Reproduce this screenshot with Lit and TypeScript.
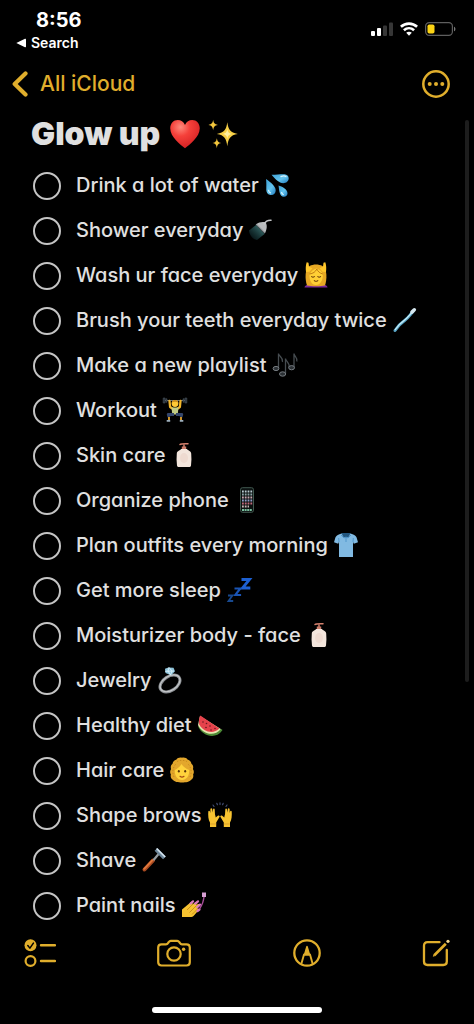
import { LitElement, html, css, svg, nothing, type SVGTemplateResult } from "lit";
import { customElement, property, state } from "lit/decorators.js";

const GLYPHS: Record<string, SVGTemplateResult> = {
  heart: svg`
    <defs><radialGradient id="hg" cx=".35" cy=".25" r=".8"><stop offset="0" stop-color="#ff8a7c"/><stop offset=".4" stop-color="#f5403a"/><stop offset="1" stop-color="#d31f22"/></radialGradient></defs>
    <path fill="url(#hg)" d="M13 24.6C9.500 21.800 1 15.500 1 8.300 1 4.500 3.700 1.700 7.100 1.700c2.600 0 4.800 1.500 5.900 3.900 1.100-2.400 3.300-3.900 5.900-3.900C22.300 1.700 25 4.500 25 8.300c0 7.200-8.500 13.500-12 16.300z"/>`,
  sparkles: svg`
    <path fill="#f6cf45" d="M16.500 3.500c.9 6 2.200 8.400 8.500 9.500-6.300 1.100-7.600 3.500-8.500 10-.9-6.500-2.200-8.900-8.500-10 6.300-1.100 7.600-3.500 8.500-9.500z"/>
    <path fill="#fff0a0" d="M16.500 9c.5 2.700 1.200 3.500 3.900 4-2.700.5-3.400 1.300-3.900 4-.5-2.700-1.200-3.500-3.900-4 2.700-.5 3.400-1.300 3.900-4z"/>
    <path fill="#f3c63c" d="M5 1.500c.5 2.800 1.100 3.600 3.800 4.100C6.100 6.100 5.500 7 5 9.900 4.500 7 3.900 6.100 1.200 5.600 3.900 5.100 4.500 4.300 5 1.500zM8 16.500c.5 2.600 1 3.400 3.500 3.900-2.500.5-3 1.300-3.500 4.100-.5-2.800-1-3.600-3.500-4.100 2.500-.5 3-1.300 3.500-3.900z"/>`,
  water: svg`
    <defs><linearGradient id="wg" x1="0" y1="0" x2="1" y2="1"><stop offset="0" stop-color="#3d9fd4"/><stop offset=".55" stop-color="#63c4ee"/><stop offset="1" stop-color="#2179bd"/></linearGradient></defs>
    <path fill="url(#wg)" d="M2 7c5 3.500 9.700 7.300 9.700 11.400 0 2.600-1.800 4.600-4.500 4.600-3 0-4.900-2.200-4.900-5.500C2.300 14 2.500 10.500 2 7z"/>
    <path fill="url(#wg)" d="M7.500 2.800C13 2.600 17 2 20.500 2.200c2.500.2 4.200 1.800 4.200 4.100 0 3-2.400 4.900-5.400 4.900C15 11.200 11 7 7.500 2.800z"/>
    <path fill="url(#wg)" d="M14.500 13.500c3.500 1 9 3.900 9 7.700 0 2-1.400 3.600-3.600 3.600-4.400 0-4.700-6.500-5.400-11.300z"/>
    <path fill="none" stroke="#d8f4ff" stroke-width="1.300" stroke-linecap="round" d="M4.600 18.500c.2 1.200.8 2 1.800 2.300M17 4.600c1.700-.8 3.700-1 4.900-.1M17.600 20.500c.3 1 .8 1.700 1.700 2"/>`,
  shower: svg`
    <defs><linearGradient id="sg" x1="1" y1="0" x2="0" y2="1"><stop offset="0" stop-color="#4b8d8b"/><stop offset="1" stop-color="#0b2a2f" stop-opacity=".3"/></linearGradient></defs>
    <path fill="url(#sg)" d="M8 8L1 13.500c.5 5 3.500 8.500 8 9.500l7.500-6z"/>
    <path fill="#b9bcbe" d="M8 7.500C11 5 15 4.500 17.500 5.500c1.800 1.900 1.700 6.500-.6 10.800z"/>
    <path fill="#8b9397" d="M7.700 7.400l.9-.6 8.700 8.800-.7.900z"/>
    <path fill="none" stroke="#c3c5c7" stroke-width="1.600" stroke-linecap="round" d="M16 7c2-3.500 4-4 7-3.800"/>`,
  massage: svg`
    <path fill="#7a2a9c" d="M1.500 25.500c0-2.500 4-3.500 11.500-3.500s11.500 1 11.500 3.500z"/>
    <path fill="#e6a824" d="M4 23.500C1.800 17 1.800 6.500 6.500 4c4-2 9-2 13 0 4.700 2.500 4.700 13 2.500 19.500-4 1-14 1-18 0z"/>
    <path fill="#ffcf35" d="M6.500 12.500C8 9 10.500 7 13.500 6.500c3.500 1 5.500 3 6.300 6 .4 5.500-2.500 10.500-6.800 10.500s-7-5-6.500-10.500z"/>
    <path fill="none" stroke="#c27d13" stroke-width="1" d="M6.500 12c3.500-.5 6-2 7.300-5 1 2.500 3 4.200 6 5"/>
    <path fill="none" stroke="#6f420b" stroke-width="1.100" stroke-linecap="round" d="M8.600 14.500c.8.900 2 .9 2.800 0M14.800 14.500c.8.900 2 .9 2.800 0M11.300 18.600c1 .8 2.500.8 3.500 0"/>
    <path fill="#ffc72b" d="M3 10c-.5-3.500-.3-6.800.7-9.700l1.800.4.5 4 3.500 1.500-3 3.500zM23 10c.5-3.500.3-6.800-.7-9.700l-1.800.4-.5 4-3.500 1.500 3 3.500z"/>`,
  toothbrush: svg`
    <path fill="none" stroke="#5aa7c8" stroke-width="3" stroke-linecap="round" d="M3 23.500c3-4.500 4.500-6.500 9-9.500 4-2.800 5.500-5.500 9-9.500"/>
    <path fill="none" stroke="#c7edf8" stroke-width="1.300" stroke-linecap="round" d="M3.300 22.500c3-4.300 4.500-6 8.500-8.800 4-2.800 5.500-5.500 8.700-8.700"/>
    <path fill="none" stroke="#d5e6ee" stroke-width="3.600" stroke-linecap="round" d="M20 5l2.300-2.200"/>`,
  notes: svg`
    <g fill="none" stroke="#464c50" stroke-width="1.300"><path d="M6.500 16V1.500c.3 3 5 4 4 8.500M13.500 21.500V6.500c.3 3 4.800 4.500 3.500 9M22 15.500V1.500c.2 3 4 4 2.800 8"/></g>
    <g fill="#2c3135" stroke="#777d82" stroke-width="1"><ellipse cx="4" cy="16.500" rx="2.900" ry="2.100"/><ellipse cx="10.600" cy="22" rx="3.100" ry="2.200"/><ellipse cx="19.600" cy="15.700" rx="2.900" ry="2.100"/></g>`,
  lifter: svg`
    <path stroke="#6a757c" stroke-width="1" d="M2 3.500h22"/>
    <path fill="#27303a" stroke="#4a545c" stroke-width=".6" d="M1.200 1h1.900v5H1.200zM22.900 1h1.900v5h-1.900zM3.900 1.800H5v3.400H3.900zM21 1.800h1.100v3.400H21z"/>
    <path fill="none" stroke="#f2b62a" stroke-width="2.300" stroke-linecap="round" stroke-linejoin="round" d="M7.500 4l.6 6 2.900 2M18.500 4l-.6 6-2.900 2"/>
    <path fill="#c2cc84" d="M9.500 10.500h7l-.8 7h-5.400z"/>
    <circle cx="13" cy="6.500" r="3.400" fill="#ffc935"/><path fill="#c98a20" d="M9.700 5.500C10 2 16 2 16.300 5.500c-2-1-4.600-1-6.600 0z"/>
    <path fill="none" stroke="#34466b" stroke-width="2.800" stroke-linejoin="round" d="M12 17.500H6.200l.8 2.500M14 17.500h5.800L19 20"/>
    <path fill="none" stroke="#d99c2c" stroke-width="1.900" d="M7 20v3M19 20v3"/>
    <path fill="#9eb0bd" d="M4.700 23h3.500v1.700H4.700zM17.800 23h3.500v1.700h-3.500z"/>`,
  lotion: svg`
    <path fill="none" stroke="#d4806d" stroke-width="1.500" stroke-linejoin="round" stroke-linecap="round" d="M9 2.500c1-1 2.500-1 8-.8M13 2v4"/>
    <path fill="#cc7b69" d="M10.800 4.500h4.400v3h-4.400z"/>
    <path fill="#f3e5dc" d="M10 7h6c.5 1.500 4 1.500 4.200 4.500.4 4 .3 8-.2 12-.2 1.300-1 1.500-2 1.500H8c-1 0-1.800-.2-2-1.500-.5-4-.6-8-.2-12C6 8.500 9.500 8.500 10 7z"/>
    <ellipse cx="13" cy="16" rx="4" ry="5" fill="#eedad0"/>`,
  phone: svg`
    <rect x="6.500" y=".7" width="13" height="24.600" rx="2" fill="#0b1110" stroke="#41584f" stroke-width="1"/>
    <g stroke-width="1.800" fill="none" stroke-dasharray="1.800 1"><path stroke="#b7c9cf" d="M8 4.500h10.500"/><path stroke="#8ba3a5" d="M8 7.500h10.500"/><path stroke="#c9a6b0" d="M8 10.500h10.500"/><path stroke="#8e9cc7" d="M8 13.500h10.500"/><path stroke="#c0697a" d="M8 16.500h10.500"/><path stroke="#c8b6b6" d="M8 19.500h7"/></g>
    <path stroke="#79bd9d" stroke-width="2" stroke-dasharray="2 .6" d="M8 23h10.400"/>`,
  shirt: svg`
    <path fill="#81bae2" d="M8.500 1.500h9c3 .7 5 2 6 3.800l1.500 5-4.200 1.400-.8-1.700V25H6V10l-.8 1.700L1 10.300l1.500-5c1-1.800 3-3.100 6-3.800z"/>
    <path fill="#225780" d="M8.500 1h9l-1.500 3.500c-1.500 1.400-4.500 1.400-6 0z"/>
    <path fill="none" stroke="#4c93c8" stroke-width=".9" d="M6 10l-.3-4M20 10l.3-4M8 3l3 3 2-1 2 1 3-3M13 5v5"/>`,
  zzz: svg`
    <path fill="none" stroke="#1d60d2" stroke-width="2.800" d="M15.500 2.500h8l-7 8.500h7.800"/>
    <path fill="none" stroke="#1a54b4" stroke-width="2.100" d="M8.500 11.500h5.800l-5 6.500h5.800"/>
    <path fill="none" stroke="#18498f" stroke-width="1.800" d="M2 18.500h4.500l-4 5.500h4.700"/>`,
  ring: svg`
    <ellipse cx="13" cy="16.500" rx="11" ry="7" transform="rotate(-33 13 16.500)" fill="none" stroke="#8c9094" stroke-width="3"/>
    <ellipse cx="13" cy="16.300" rx="11" ry="7" transform="rotate(-33 13 16.300)" fill="none" stroke="#c5c7c9" stroke-width="1.100"/>
    <path fill="#8fc4db" d="M8 1.800L11.500.5l5 .3 1.500 3.500-3.800 4-5.700-2.300z"/>
    <path fill="none" stroke="#dff4fb" stroke-width=".8" d="M8 4.300l9-.3M11 4l2.500 4L15 4l-3-3.500z"/>`,
  melon: svg`
    <path fill="#4d8c36" d="M1.200 14.500C5 24 18.500 28 25.200 18.500c.3-.5 0-1-.5-1.300L2 13z"/>
    <path fill="#e9e3b0" d="M1 13C5.500 22 17 25.500 23.800 17L3 4z"/>
    <path fill="#e6424b" d="M3.300 3.500c-1.500 3-1.700 6-1 9C6.500 20 16 22.800 22.400 16.600z"/>
    <g fill="#6a1720"><circle cx="6" cy="10" r=".8"/><circle cx="9.500" cy="11.500" r=".8"/><circle cx="9" cy="15.500" r=".8"/><circle cx="13" cy="14" r=".8"/><circle cx="14" cy="18" r=".8"/><circle cx="18" cy="16.500" r=".8"/></g>`,
  curly: svg`
    <path fill="#e3a72c" d="M13 .8c2.500-.6 4.500.4 5.500 1.600 2.500.5 3.800 2.500 3.900 4.300 1.800 1.300 2.200 3.500 1.500 5.300 1.300 1.800 1.200 4 .2 5.500.7 2.300-.3 4.500-2 5.300C20.700 25 17 25.500 13 25.500S5.300 25 3.900 22.800c-1.700-.8-2.700-3-2-5.300-1-1.500-1.100-3.700.2-5.500-.7-1.800-.3-4 1.500-5.300.1-1.800 1.400-3.800 3.900-4.300C8.500 1.200 10.500.2 13 .8z"/>
    <path fill="none" stroke="#c28319" stroke-width=".8" stroke-dasharray="1.500 1.500" d="M5 20c-2-4-1.500-10 2.500-13.500M21 20c2-4 1.500-10-2.500-13.500M8 4.500c3-1.500 7-1.500 10 0"/>
    <path fill="#ffd23c" d="M5.800 13c2.700-1.200 5-3.200 6.700-6 1.700 2.700 4.500 4.800 7.700 6 .3 5.800-2.700 10-7.200 10s-7.500-4.200-7.200-10z"/>
    <g fill="#5a350b"><ellipse cx="9.800" cy="14.300" rx="1" ry="1.300"/><ellipse cx="16.200" cy="14.300" rx="1" ry="1.300"/></g>
    <path fill="none" stroke="#a64d16" stroke-width="1.200" stroke-linecap="round" d="M11 19.300c1.200.9 2.800.9 4 0"/>`,
  hands: svg`
    <g fill="#f8c331"><path d="M3 25v-4.500C1.300 18 1 13 1.300 9.500c.2-1 1.400-1 1.600 0L3.300 11l.1-4c.2-1 1.600-1 1.800 0l.3 3.500.6-3.300c.2-1 1.600-.8 1.600.2L8 12.500c.4 1 .6 2 .7 3l2.400-1.900c1-.6 2.100.4 1.400 1.400L9.200 20.500V25z"/><path d="M23 25v-4.500c1.700-2.500 2-7.500 1.700-11-.2-1-1.400-1-1.600 0l-.4 1.500-.1-4c-.2-1-1.600-1-1.800 0l-.3 3.500-.6-3.300c-.2-1-1.600-.8-1.600.2l-.3 5.100c-.4 1-.6 2-.7 3l-2.400-1.900c-1-.6-2.100.4-1.400 1.400l3.300 5.500V25z"/></g>
    <path fill="none" stroke="#d2922a" stroke-width=".7" d="M3.200 22h6M16.800 22h6"/>
    <path stroke="#46527a" stroke-width="1.100" stroke-linecap="round" d="M6 3l1 1.500M9.800 1.200l.6 1.600M13 .8v1.700M16.200 1.200l-.6 1.600M20 3l-1 1.500"/>`,
  razor: svg`
    <path stroke="#a84a21" stroke-width="4" stroke-linecap="round" d="M3.500 22.500L12 13.500"/>
    <path stroke="#e1783c" stroke-width="1.900" stroke-linecap="round" d="M3.200 21.800l8-8.500"/>
    <path stroke="#969da2" stroke-width="2.200" stroke-linecap="round" d="M13 12.500l5-6"/>
    <path stroke="#6b8599" stroke-width="4" d="M15 2.300l8.500 8.500"/>
    <path stroke="#d4e2ec" stroke-width="1.700" d="M15.600 1.500l8.500 8.500"/>`,
  nails: svg`
    <path fill="#f6c231" d="M1 25v-7.500l9-7.500c1.200-.8 2.300.3 1.700 1.500l-1 1.500 4-3c1.200-.7 2.300.4 1.500 1.600l-1.200 1.700 2-1.200c1.200-.5 2.200.6 1.400 1.700l-2.200 2.700c1.400-.3 2.200.8 1.400 1.800L13 23.500c-1 1-2 1.500-4 1.500z"/>
    <path fill="none" stroke="#be8118" stroke-width=".8" d="M6 18l5-5M8.500 20.500l7-7M11 22.500l6-6"/>
    <path fill="none" stroke="#dc79bf" stroke-width="2.200" stroke-linecap="round" d="M9.500 11.500l2.500-2.200M14.200 11.700l2.800-2.400M16.200 15.300l2.800-2.700M16.500 19l2-1.500"/>
    <path fill="none" stroke="#a94d9b" stroke-width="1.300" d="M18.500 17c2.500-3.500 4-7 4.500-12"/>
    <path fill="#d69fd3" d="M21 .5h4v4.500h-4z"/>`,
};

const ITEMS: [string, string][] = [
  ["Drink a lot of water", "water"],
  ["Shower everyday", "shower"],
  ["Wash ur face everyday", "massage"],
  ["Brush your teeth everyday twice", "toothbrush"],
  ["Make a new playlist", "notes"],
  ["Workout", "lifter"],
  ["Skin care", "lotion"],
  ["Organize phone", "phone"],
  ["Plan outfits every morning", "shirt"],
  ["Get more sleep", "zzz"],
  ["Moisturizer body - face", "lotion"],
  ["Jewelry", "ring"],
  ["Healthy diet", "melon"],
  ["Hair care", "curly"],
  ["Shape brows", "hands"],
  ["Shave", "razor"],
  ["Paint nails", "nails"],
];

@customElement("note-emoji")
export class NoteEmoji extends LitElement {
  @property() name = "";
  static styles = css`
    :host { display: block; flex: none; width: 26px; height: 26px; }
    svg { display: block; width: 100%; height: 100%; overflow: visible; }
  `;
  render() {
    return html`<svg viewBox="0 0 26 26" fill="none" aria-hidden="true">${GLYPHS[this.name] ?? nothing}</svg>`;
  }
}

@customElement("app-root")
export class AppRoot extends LitElement {
  @state() private done = new Set<number>();

  static styles = css`
    :host {
      display: flex;
      flex-direction: column;
      min-height: 100vh;
      background: #000;
      color: #e0e0e0;
      font-family: Inter, "Liberation Sans", sans-serif;
      --accent: #e0ae2c;
    }
    * { box-sizing: border-box; }
    svg { display: block; flex: none; }
    button, a { color: var(--accent); background: none; border: 0; padding: 0; font: inherit; text-decoration: none; }
    button { cursor: pointer; }
    .status { display: flex; justify-content: space-between; padding: 8px 18px 0 16px; height: 60px; color: #fff; }
    .clock { padding-left: 20px; font-size: 20px; line-height: 24px; font-weight: 700; }
    .status .back-app { display: flex; align-items: center; gap: 5px; color: #fff; font-size: 14px; line-height: 22px; font-weight: 600; }
    .signals { display: flex; gap: 7px; height: 14px; margin-top: 14px; }
    .nav { display: flex; align-items: center; justify-content: space-between; height: 47px; padding: 0 24px 0 12px; }
    .back { display: flex; align-items: center; gap: 12px; font-size: 21px; line-height: 28px; font-weight: 500; }
    .note { position: relative; flex: 1; }
    .title { display: flex; align-items: center; height: 56px; margin: 0; padding: 0 0 2px 31px; font-size: 32px; line-height: 40px; font-weight: 900; }
    .title note-emoji { width: 32px; height: 32px; margin-left: 9px; }
    .title note-emoji + note-emoji { margin-left: 6px; }
    .list { list-style: none; margin: 0; padding: 0 16px 0 33px; }
    .row { display: flex; align-items: center; gap: 15px; height: 45px; }
    .tick { appearance: none; flex: none; width: 28px; height: 28px; margin: 0; border: 2px solid #c4c4c4; border-radius: 50%; }
    .tick:checked { border-color: var(--accent); background: radial-gradient(var(--accent) 60%, #000 62%); }
    .label { display: flex; align-items: center; gap: 5px; padding-bottom: 2px; font-size: 20px; line-height: 26px; font-weight: 500; font-feature-settings: "cv11"; }
    .thumb { position: absolute; top: 13px; right: 5px; width: 4px; height: 68.5%; border-radius: 2px; background: #1d1d1d; }
    .tools { display: flex; align-items: center; justify-content: space-between; height: 50px; padding: 0 24px; }
    .home { display: flex; justify-content: center; padding: 29px 0 11px; }
    .bar { width: 36%; height: 6px; border-radius: 3px; background: #fff; }
  `;

  private toggle(i: number) {
    const next = new Set(this.done);
    next.has(i) ? next.delete(i) : next.add(i);
    this.done = next;
  }

  render() {
    return html`
      <header>
        <div class="status">
          <div>
            <div class="clock">8:56</div>
            <a class="back-app" href="#search">
              <svg width="10" height="10" viewBox="0 0 10 10"><path fill="#fff" d="M.3 5L9 .8Q10 .4 10 1.500v7Q10 9.600 9 9.200z"/></svg>
              Search
            </a>
          </div>
          <div class="signals">
            <svg width="22" height="14" viewBox="0 0 22 14"><g fill="#fff"><rect y="9" width="4" height="5" rx="1"/><rect x="6" y="6" width="4" height="8" rx="1"/></g><g fill="#363636"><rect x="12" y="3.500" width="4" height="10.500" rx="1"/><rect x="18" y=".5" width="4" height="13.500" rx="1"/></g></svg>
            <svg width="18" height="14" viewBox="0 0 18 14"><g fill="none" stroke="#fff" stroke-width="2.600"><path d="M.9 4.800c4.600-4.300 11.600-4.300 16.200 0M3.900 8.200c3-2.700 7.200-2.700 10.200 0"/></g><path fill="#fff" d="M9 13.800l-2.800-3c1.600-1.400 4-1.400 5.600 0z"/></svg>
            <svg width="31" height="14" viewBox="0 0 31 14"><rect x=".6" y=".6" width="26.800" height="12.800" rx="3.600" fill="none" stroke="#5e5e5e" stroke-width="1.200"/><rect x="2.500" y="2.500" width="7" height="9" rx="1.800" fill="#fcd415"/><path fill="#777" d="M29 4.700c1.900.6 1.900 4 0 4.600z"/></svg>
          </div>
        </div>
        <nav class="nav">
          <a class="back" href="#folders">
            <svg width="16" height="26" viewBox="0 0 16 26"><path d="M13.500 2.500L2.700 13l10.800 10.500" fill="none" stroke="currentColor" stroke-width="4.200" stroke-linecap="round" stroke-linejoin="round"/></svg>
            All iCloud
          </a>
          <button aria-label="More">
            <svg width="28" height="28" viewBox="0 0 28 28"><circle cx="14" cy="14" r="12.700" fill="none" stroke="currentColor" stroke-width="2.500"/><g fill="currentColor"><circle cx="7.700" cy="14" r="2"/><circle cx="14" cy="14" r="2"/><circle cx="20.300" cy="14" r="2"/></g></svg>
          </button>
        </nav>
      </header>
      <main class="note">
        <h1 class="title">Glow up<note-emoji name="heart"></note-emoji><note-emoji name="sparkles"></note-emoji></h1>
        <ul class="list">
          ${ITEMS.map(([text, emoji], i) => html`
            <li class="row">
              <input class="tick" type="checkbox" id="item-${i}" .checked=${this.done.has(i)} @change=${() => this.toggle(i)}>
              <label class="label" for="item-${i}">${text}<note-emoji name=${emoji}></note-emoji></label>
            </li>`)}
        </ul>
        <div class="thumb"></div>
      </main>
      <footer>
        <div class="tools">
          <button aria-label="Checklist">
            <svg width="32" height="28" viewBox="0 0 32 28"><circle cx="6.500" cy="6.300" r="6" fill="currentColor"/><path d="M3.800 6.500l2.100 2.600 3.500-5" fill="none" stroke="#000" stroke-width="1.500" stroke-linecap="round" stroke-linejoin="round"/><circle cx="6.500" cy="22" r="4.900" fill="none" stroke="currentColor" stroke-width="2.200"/><path stroke="currentColor" stroke-width="2.400" stroke-linecap="round" d="M17 6.300h14M17 22h14"/></svg>
          </button>
          <button aria-label="Camera">
            <svg width="34" height="28" viewBox="0 0 34 28"><g fill="none" stroke="currentColor" stroke-width="2.200" stroke-linejoin="round"><path d="M4.500 5.300H9c1 0 1.500-.4 2-1.200l.8-1.100c.5-.8 1-1.200 2-1.200h6.400c1 0 1.500.4 2 1.200l.8 1.100c.5.800 1 1.200 2 1.200h4.500c2 0 3.300 1.200 3.300 3.200v14.800c0 2-1.300 3.200-3.300 3.200h-25c-2 0-3.300-1.200-3.300-3.200V8.500c0-2 1.300-3.200 3.300-3.200z"/><circle cx="17" cy="15" r="6.700"/></g><circle cx="26.600" cy="10.300" r="1.700" fill="currentColor"/></svg>
          </button>
          <button aria-label="Markup">
            <svg width="28" height="28" viewBox="0 0 28 28"><circle cx="14" cy="14" r="12.700" fill="none" stroke="currentColor" stroke-width="2.300"/><path fill="none" stroke="currentColor" stroke-width="1.900" stroke-linejoin="round" d="M8.300 25l2.700-9.500h6L19.700 25"/><path fill="currentColor" d="M10.500 16.500l2.700-9c.3-.9 1.300-.9 1.600 0l2.700 9z"/></svg>
          </button>
          <button aria-label="New note">
            <svg width="28" height="28" viewBox="0 0 28 28"><path fill="none" stroke="currentColor" stroke-width="2.300" stroke-linecap="round" d="M17.500 3.200H5.500C3.200 3.200 2 4.400 2 6.700v15.800C2 24.800 3.200 26 5.500 26h15.800c2.300 0 3.500-1.200 3.500-3.500V11"/><path stroke="currentColor" stroke-width="2.700" d="M12.300 16.200L23.800 4.700"/><path fill="currentColor" d="M10.800 17.700l.7-2.500 1.800 1.800z"/><circle cx="26" cy="2.300" r="1.600" fill="#f3d78c"/></svg>
          </button>
        </div>
        <div class="home"><div class="bar"></div></div>
      </footer>
    `;
  }
}
